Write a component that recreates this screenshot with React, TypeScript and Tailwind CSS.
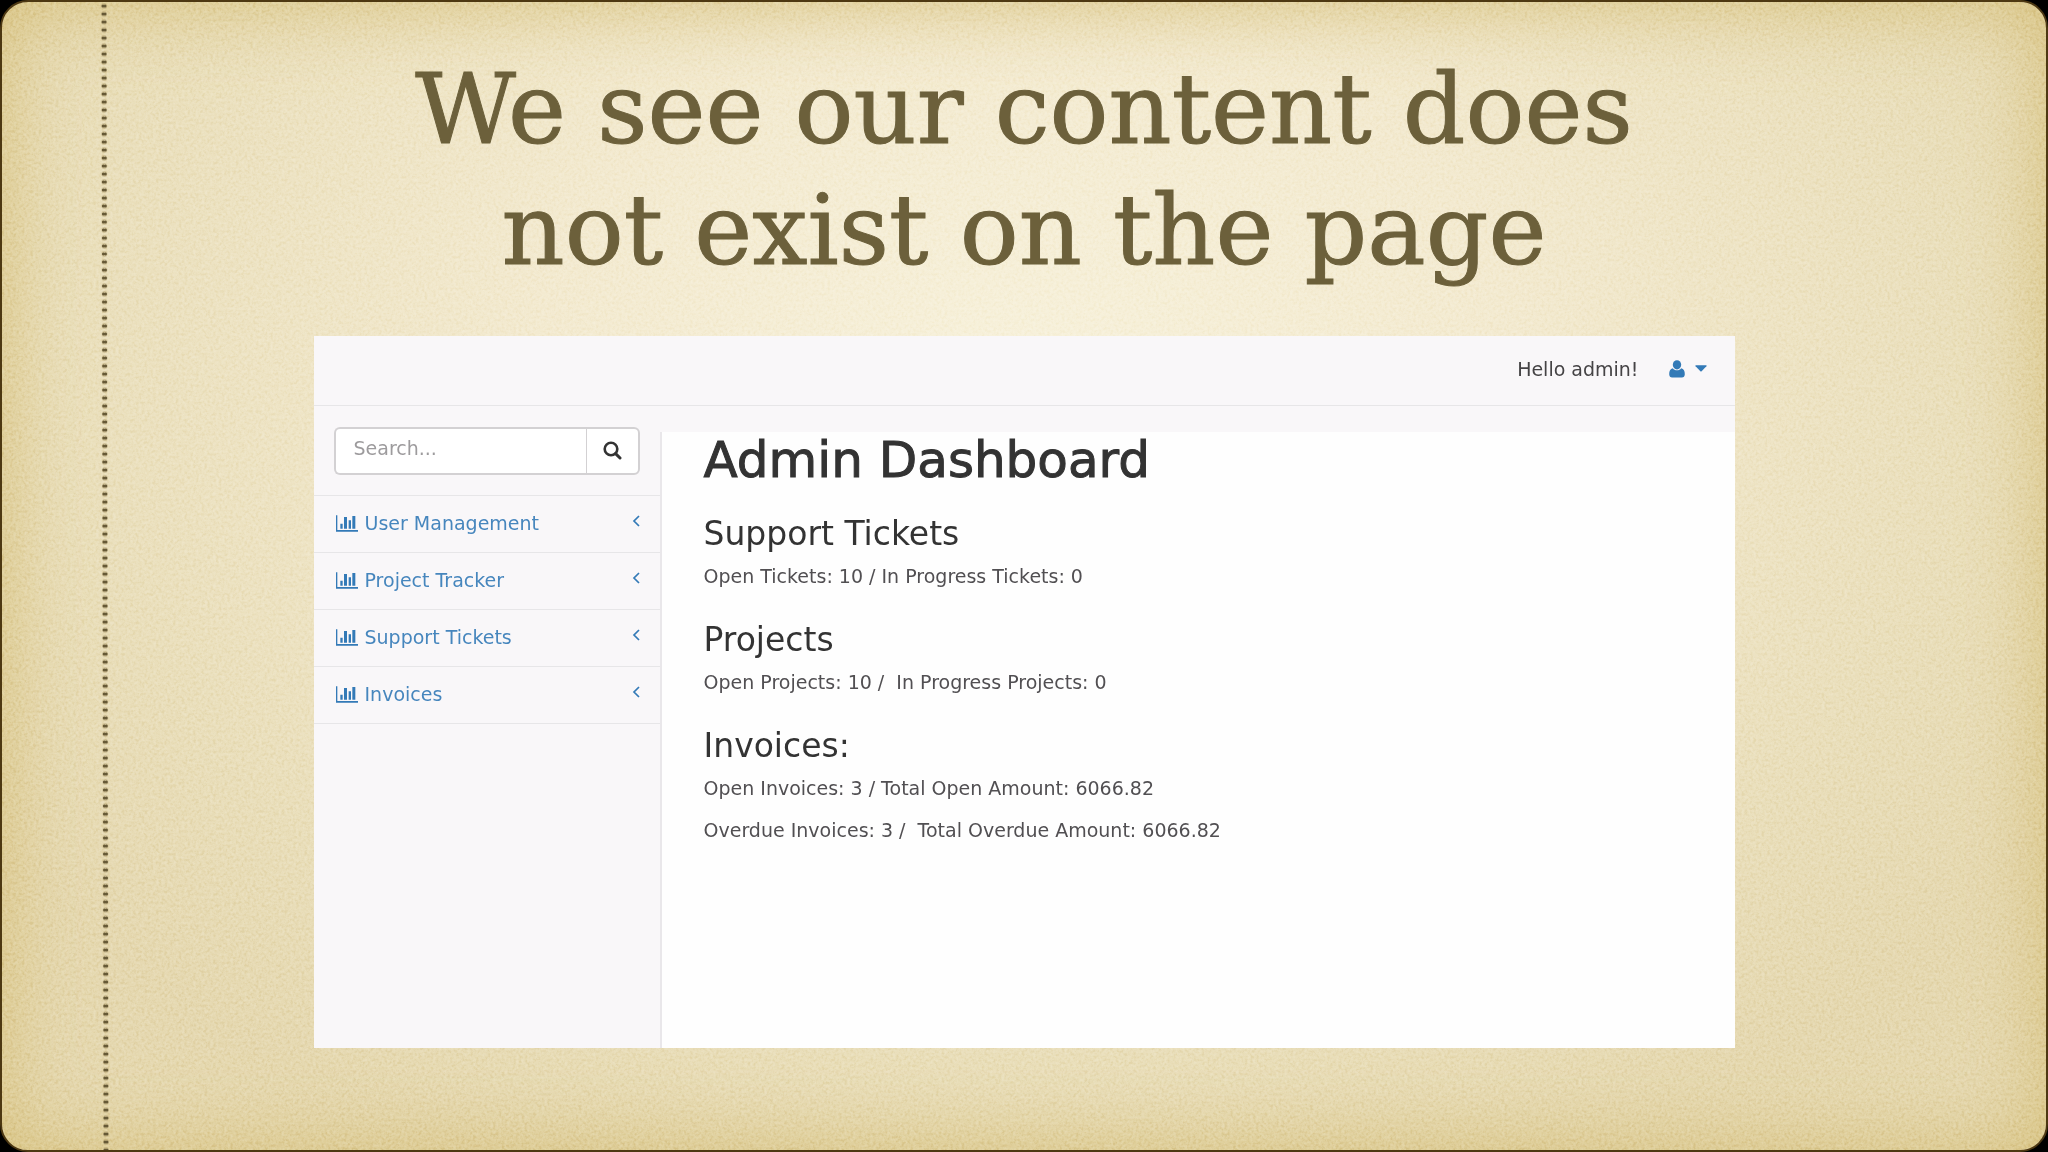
import { useState } from "react";

interface NavItem {
	label: string;
	href: string;
}

interface Section {
	title: string;
	lines: string[];
}

const navItems: NavItem[] = [
	{ label: "User Management", href: "#users" },
	{ label: "Project Tracker", href: "#projects" },
	{ label: "Support Tickets", href: "#tickets" },
	{ label: "Invoices", href: "#invoices" },
];

const sections: Section[] = [
	{
		title: "Support Tickets",
		lines: ["Open Tickets: 10 / In Progress Tickets: 0"],
	},
	{
		title: "Projects",
		lines: ["Open Projects: 10 /  In Progress Projects: 0"],
	},
	{
		title: "Invoices:",
		lines: [
			"Open Invoices: 3 / Total Open Amount: 6066.82",
			"Overdue Invoices: 3 /  Total Overdue Amount: 6066.82",
		],
	},
];

const ChartIcon = () => (
	<svg width="22" height="17" viewBox="0 0 66 51" fill="currentColor" aria-hidden="true">
		<path d="M0 1h4v44h62v5H0z" />
		<path d="M13 26h7v15h-7zM24 6h9v35h-9zM38 16h7v25h-7zM49 3h9v38h-9z" />
	</svg>
);

const ChevronIcon = () => (
	<svg width="8" height="12" viewBox="0 0 8 12" fill="none" stroke="currentColor" strokeWidth="1.7" aria-hidden="true">
		<path d="M7 1 2 6l5 5" />
	</svg>
);

const SearchIcon = () => (
	<svg width="19" height="19" viewBox="0 0 19 19" fill="none" stroke="currentColor" aria-hidden="true">
		<circle cx="8" cy="8" r="6.3" strokeWidth="2.6" />
		<path d="m12.6 12.6 4.4 4.4" strokeWidth="3" strokeLinecap="round" />
	</svg>
);

const UserIcon = () => (
	<svg width="16" height="18" viewBox="0 0 16 18" fill="currentColor" aria-hidden="true">
		<ellipse cx="8" cy="4.8" rx="4.2" ry="4.6" />
		<path d="M3.8 8.2C1.2 8.6.2 11.2.2 14.2c0 2 1.2 3.3 2.9 3.3h9.8c1.7 0 2.9-1.3 2.9-3.3 0-3-1-5.6-3.6-6C11.2 9.5 9.7 10.3 8 10.3S4.8 9.5 3.8 8.2z" />
	</svg>
);

const CaretIcon = () => (
	<svg width="12" height="7" viewBox="0 0 12 7" fill="currentColor" aria-hidden="true">
		<path d="M.8.3h10.4q.8.2.2 1L6.6 6.3q-.6.5-1.2 0L.6 1.3Q0 .5.8.3z" />
	</svg>
);

// Paper grain and the stitched line down the left margin
const PaperTexture = () => (
	<svg className="pointer-events-none absolute inset-0 h-full w-full" aria-hidden="true">
		<filter id="grain" x="0" y="0" width="100%" height="100%" colorInterpolationFilters="sRGB">
			<feTurbulence type="fractalNoise" baseFrequency="0.35" numOctaves="3" seed="4" />
			<feColorMatrix values="1.2 1.2 0 0 -0.7  1.2 1.2 0 0 -0.7  1.2 1.2 0 0 -0.7  0 0 0 0 1" />
		</filter>
		<rect width="100%" height="100%" filter="url(#grain)" className="opacity-30 mix-blend-soft-light" />
		<g strokeLinecap="round">
			<line x1="102" y1="4" x2="104" y2="100%" stroke="#b9a777" strokeWidth="6" strokeDasharray="0 8" opacity="0.5" />
			<line x1="101" y1="4" x2="103" y2="100%" stroke="#665936" strokeWidth="3" strokeDasharray="0 8" />
			<line x1="103" y1="4" x2="105" y2="100%" stroke="#665936" strokeWidth="3" strokeDasharray="0 8" />
		</g>
	</svg>
);

const Sidebar = () => {
	const [query, setQuery] = useState("");

	return (
		<aside className="w-[346px] shrink-0">
			<form
				className="flex h-[90px] border-b border-[#e7e6e8] px-5 pt-[21px]"
				onSubmit={(e) => e.preventDefault()}
			>
				<input
					type="text"
					aria-label="Search"
					placeholder="Search..."
					value={query}
					onChange={(e) => setQuery(e.target.value)}
					className="h-12 min-w-0 flex-1 rounded-l-md border-2 border-r-0 border-[#d3d1d3] bg-white px-[18px] pb-1.5 text-[19px] text-[#555] placeholder:text-[#9d9b9d] focus:outline-none"
				/>
				<button
					type="submit"
					aria-label="Submit search"
					className="flex h-12 w-[54px] items-center justify-center rounded-r-md border-2 border-l border-[#d3d1d3] bg-white pb-0.5 text-[#333]"
				>
					<SearchIcon />
				</button>
			</form>
			<nav>
				<ul>
					{navItems.map((item) => (
						<li key={item.label} className="border-b border-[#e7e6e8]">
							<a
								href={item.href}
								className="flex h-14 items-center pr-5 pb-0.5 pl-[22px] text-[19px] leading-7 text-[#337ab7]"
							>
								<ChartIcon />
								<span className="ml-[7px] flex-1 opacity-90">{item.label}</span>
								<span className="pb-1">
									<ChevronIcon />
								</span>
							</a>
						</li>
					))}
				</ul>
			</nav>
		</aside>
	);
};

const Dashboard = () => (
	<div className="flex flex-1 flex-col bg-[#f9f7f9] font-['DejaVu_Sans',sans-serif] text-[#333]">
		<header className="flex h-[70px] shrink-0 items-center justify-end border-b border-[#e7e6e8] pr-7 pb-1">
			<span className="text-[19px] leading-7 text-[#454345]">Hello admin!</span>
			<button type="button" aria-label="User menu" className="ml-[30px] flex items-center gap-2.5 text-[#337ab7]">
				<UserIcon />
				<CaretIcon />
			</button>
		</header>
		<div className="flex flex-1">
			<Sidebar />
			<main className="mt-[26px] flex-1 border-l-2 border-[#e9e7ea] bg-[#fefefe] pl-[42px]">
				<h2 className="text-[50px] leading-[56px] [-webkit-text-stroke:1px_#333]">Admin Dashboard</h2>
				{sections.map((section) => (
					<section key={section.title} className="pt-[26px]">
						<h3 className="text-[33px] leading-[40px]">{section.title}</h3>
						<div className="flex flex-col gap-[14px] pt-2 pb-1">
							{section.lines.map((line) => (
								<p key={line} className="text-[19px] leading-7 whitespace-pre text-[#514f52]">
									{line}
								</p>
							))}
						</div>
					</section>
				))}
			</main>
		</div>
	</div>
);

const App = () => {
	return (
		<div className="bg-black">
			<div className="relative flex min-h-screen flex-col overflow-hidden rounded-[28px] border-2 border-[#4d3812] bg-[#e6d7ab] bg-[radial-gradient(ellipse_60%_75%_at_50%_32%,#f7f1db_0%,#f3ead0_40%,#e9deba_80%,#e5d8b0_100%)] shadow-[inset_0_0_80px_#d6c07b]">
				<PaperTexture />
				<div className="relative mx-auto flex w-full max-w-[1421px] flex-1 flex-col pt-[47px] pb-[102px]">
					<h1 className="text-center font-['American_Typewriter','DejaVu_Serif',serif] text-[98px] leading-[121px] text-[#6c603b] [-webkit-text-stroke:1px_#6c603b]">
						We see our content does
						<br />
						not exist on the page
					</h1>
					<div className="mt-[45px] flex flex-1 flex-col">
						<Dashboard />
					</div>
				</div>
			</div>
		</div>
	);
};

export default App;
